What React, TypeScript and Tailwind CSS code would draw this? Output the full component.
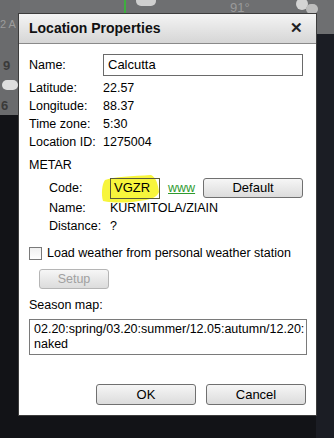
import React from 'react'

const font = { fontFamily: '"Liberation Sans", Arial, sans-serif' }

function Btn({ children, disabled, className = '' }: { children: React.ReactNode; disabled?: boolean; className?: string }) {
  return (
    <div
      className={`flex items-center justify-center h-[20px] rounded-[3px] border border-[#707070] bg-gradient-to-b from-[#f6f6f6] to-[#dcdcdc] text-[12.5px] ${
        disabled ? 'text-[#a0a0a0] border-[#b5b5b5]' : 'text-black'
      } ${className}`}
    >
      {children}
    </div>
  )
}

function Row({ label, value, w = 'w-[74px]' }: { label: string; value: string; w?: string }) {
  return (
    <div className="flex h-[18px] items-center">
      <span className={w}>{label}</span>
      <span>{value}</span>
    </div>
  )
}

export default function App() {
  return (
    <div className="relative w-[334px] h-[438px] overflow-hidden bg-[#121317]" style={font}>
      {/* desktop behind the dialog */}
      <div className="absolute left-0 top-0 w-[334px] h-[34px] bg-[#6e6f71]" />
      <div className="absolute left-0 top-0 w-[20px] h-[115px] bg-[#6a6b6d]" />
      <div className="absolute left-[316px] top-[34px] w-[18px] h-[404px] bg-[#1b1d24]" />
      <div className="absolute left-[124px] top-0 w-[2px] h-[14px] bg-[#3fae3f]" />
      <div className="absolute left-[136px] top-[-4px] w-[20px] h-[10px] rounded-full bg-[#cfcfcf]" />
      <div className="absolute left-[230px] top-[-2px] text-[13px] text-[#9a9a9a]">91°</div>
      <div className="absolute left-[296px] top-[-2px] w-[12px] h-[12px] rounded-full bg-[#d4d4d4]" />
      <div className="absolute left-[306px] top-[4px] w-[12px] h-[10px] rounded-full bg-[#bdbdbd]" />
      <div className="absolute left-0 top-[16px] text-[11px] text-[#9c9c9c]">2 A</div>
      <div className="absolute left-[3px] top-[56px] text-[13px] font-bold text-[#3a3a3a]">9</div>
      <div className="absolute left-[2px] top-[80px] w-[16px] h-[10px] rounded-full bg-[#dedede]" />
      <div className="absolute left-[1px] top-[96px] text-[13px] font-bold text-[#3a3a3a]">6</div>

      {/* dialog */}
      <div className="absolute left-[18px] top-[13px] w-[299px] h-[403px] bg-white border border-[#3c3c3c] flex flex-col text-[12.5px] text-black">
        <div className="flex items-center justify-between h-[30px] px-[10px] bg-gradient-to-b from-[#f4f4f4] to-[#d6d6d6] border-b border-[#8a8a8a]">
          <span className="text-[14px] font-bold text-[#111]">Location Properties</span>
          <span className="text-[15px] font-bold text-[#222] mr-[3px]">✕</span>
        </div>

        <div className="flex flex-col pl-[10px] pr-[10px] pt-[10px]">
          <div className="flex items-center h-[22px]">
            <span className="w-[74px]">Name:</span>
            <div className="w-[200px] h-[22px] border border-[#6a6a6a] flex items-center px-[4px] text-[13px]">Calcutta</div>
          </div>
          <div className="mt-[3px] flex flex-col">
            <Row label="Latitude:" value="22.57" />
            <Row label="Longitude:" value="88.37" />
            <Row label="Time zone:" value="5:30" />
            <Row label="Location ID:" value="1275004" />
          </div>

          <div className="mt-[5px] h-[18px] flex items-center">METAR</div>
          <div className="pl-[20px] flex flex-col">
            <div className="flex items-center h-[22px] mt-[3px]">
              <span className="w-[61px]">Code:</span>
              <div className="relative w-[50px] h-[21px]">
                <svg className="absolute left-[-11px] top-[-4px]" width="64" height="30" viewBox="0 0 64 30">
                  <path
                    d="M4 27 C2 20 3 10 6 6 C14 3 34 2 52 1 C57 3 59 10 60 18 C58 24 50 26 40 27 C28 29 14 29 4 27 Z"
                    fill="#f7f53c"
                  />
                </svg>
                <div className="absolute inset-0 border border-[#5a5a3a] flex items-center pl-[3px] text-[13px]">VGZR</div>
              </div>
              <span className="ml-[8px] text-[#2f9a2f] underline">www</span>
              <Btn className="ml-[8px] w-[100px] text-[13px]">Default</Btn>
            </div>
            <Row label="Name:" value="KURMITOLA/ZIAIN" w="w-[61px]" />
            <Row label="Distance:" value="?" w="w-[61px]" />
          </div>

          <div className="mt-[10px] flex items-center h-[16px]">
            <div className="w-[13px] h-[13px] border border-[#7a7a7a] bg-gradient-to-b from-[#f0f0f0] to-[#ffffff]" />
            <span className="ml-[5px]">Load weather from personal weather station</span>
          </div>
          <Btn disabled className="mt-[8px] ml-[10px] w-[70px]">Setup</Btn>

          <div className="mt-[7px] h-[18px] flex items-center">Season map:</div>
          <div className="mt-[5px] w-[278px] h-[36px] border border-[#7a7a7a] px-[4px] pt-[2px] leading-[15px]">
            02.20:spring/03.20:summer/12.05:autumn/12.20:
            <br />
            naked
          </div>
        </div>

        <div className="mt-auto mb-[10px] flex justify-end gap-[10px] pr-[10px]">
          <Btn className="w-[100px] h-[21px] text-[13px]">OK</Btn>
          <Btn className="w-[100px] h-[21px] text-[13px]">Cancel</Btn>
        </div>
      </div>
    </div>
  )
}
